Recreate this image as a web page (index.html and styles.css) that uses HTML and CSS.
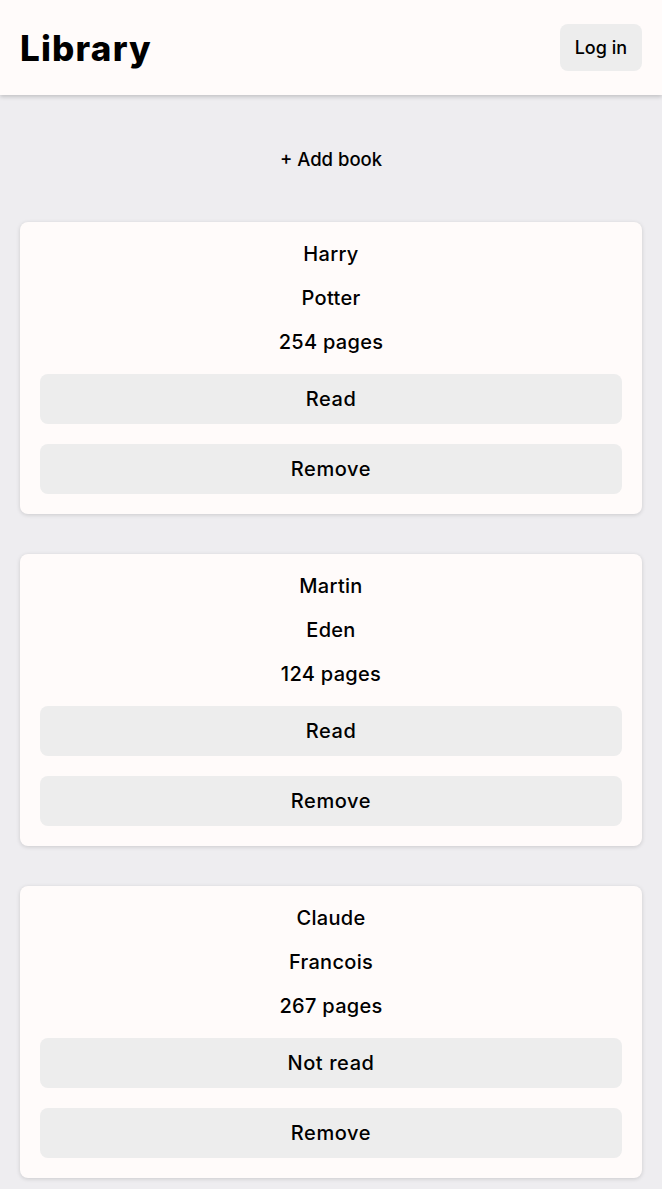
FILE: index.html
```html
<!DOCTYPE html>
<html lang="en">
<head>
<meta charset="utf-8">
<title>Library</title>
<link rel="stylesheet" href="styles.css">
</head>
<body>
<header class="topbar">
  <h1 class="brand">Library</h1>
  <button class="btn login">Log in</button>
</header>
<main class="content">
  <button class="btn add">+ Add book</button>
  <section class="card">
    <p class="line">Harry</p>
    <p class="line">Potter</p>
    <p class="line">254 pages</p>
    <button class="btn wide">Read</button>
    <button class="btn wide">Remove</button>
  </section>
  <section class="card">
    <p class="line">Martin</p>
    <p class="line">Eden</p>
    <p class="line">124 pages</p>
    <button class="btn wide">Read</button>
    <button class="btn wide">Remove</button>
  </section>
  <section class="card">
    <p class="line">Claude</p>
    <p class="line">Francois</p>
    <p class="line">267 pages</p>
    <button class="btn wide">Not read</button>
    <button class="btn wide">Remove</button>
  </section>
</main>
</body>
</html>
```

FILE: styles.css
```css
* { box-sizing: border-box; }
html, body { margin: 0; padding: 0; }
body {
  background: #eeedf0;
  font-family: Inter, "Noto Sans", sans-serif;
  color: #000;
}
.topbar {
  height: 95px;
  background: #fffbfa;
  box-shadow: 0 2px 4px rgba(0,0,0,0.18);
  display: flex;
  align-items: center;
  justify-content: space-between;
  padding: 0 20px;
  position: relative;
}
.brand {
  margin: 0;
  font-size: 35px;
  font-weight: 800;
  letter-spacing: 1.2px;
}
.btn {
  font-family: inherit;
  border: none;
  border-radius: 8px;
  background: #ededed;
  color: #000;
  font-weight: 500;
  cursor: pointer;
}
.login {
  height: 47px;
  padding: 0 15px;
  font-size: 18px;
  margin-top: -1px;
}
.content {
  display: flex;
  flex-direction: column;
  align-items: stretch;
  gap: 40px;
  padding: 40px 20px 40px;
}
.add {
  align-self: center;
  background: transparent;
  height: 47px;
  padding: 0 16px;
  font-size: 18.5px;
}
.card {
  background: #fffbfa;
  border-radius: 8px;
  box-shadow: 0 1px 4px rgba(0,0,0,0.15);
  padding: 20px;
  display: grid;
  gap: 20px;
}
.line {
  margin: 0;
  text-align: center;
  font-size: 20px;
  line-height: 24px;
  font-weight: 500;
  letter-spacing: 0.3px;
}
.wide {
  height: 50px;
  font-size: 20px;
  letter-spacing: 0.6px;
}
```
